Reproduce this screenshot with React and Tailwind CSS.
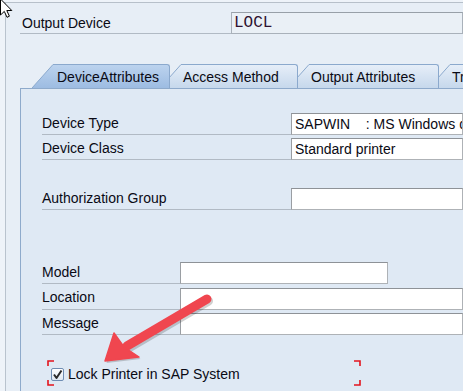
import React from "react";

function Tab({ label, active, z, first, bodyW, pl, id }) {
  const top = active ? "#bcd3ee" : "#e6eef8";
  const bot = active ? "#9dbce2" : "#c6d8ec";
  return (
    <div className={`relative flex h-[24px] items-stretch ${first ? "" : "-ml-[10px]"} ${z}`}>
      <svg width="21" height="24" className="block shrink-0">
        <defs>
          <linearGradient id={id} x1="0" y1="0" x2="0" y2="1">
            <stop offset="0" stopColor={top} />
            <stop offset="1" stopColor={bot} />
          </linearGradient>
        </defs>
        <polygon points="0,24 21,0.5 21,24" fill={`url(#${id})`} />
        <line x1="0" y1="24" x2="21" y2="0.5" stroke="#8ba9cd" strokeWidth="1" />
      </svg>
      <div
        className={`flex items-center border-t border-r border-[#8ba9cd] rounded-tr-[3px] whitespace-nowrap overflow-hidden text-[14px] text-[#0a0a14] ${
          active ? "bg-gradient-to-b from-[#bcd3ee] to-[#9dbce2]" : "bg-gradient-to-b from-[#e6eef8] to-[#c6d8ec]"
        } ${bodyW} ${pl}`}
      >
        <span className="relative top-[1px]">{label}</span>
      </div>
    </div>
  );
}

function Row({ label, labelW, inputW, value, h, mt }) {
  return (
    <div className={`flex ${h} ${mt}`}>
      <div className={`flex items-center border-b border-[#b1bac4] text-[14px] text-[#0a0a14] ${labelW} shrink-0`}>
        <span className="relative top-[1px]">{label}</span>
      </div>
      <div
        className={`self-end h-[22px] bg-white border border-[#aeb2b6] border-t-[#8e9297] border-l-[#9a9ea3] flex items-center pl-[3px] whitespace-pre overflow-hidden text-[14px] text-[#0a0a14] ${inputW}`}
      >
        {value}
      </div>
    </div>
  );
}

export default function App() {
  return (
    <div className="relative w-[463px] h-[391px] overflow-hidden bg-[#e7eef6] font-['Liberation_Sans',Arial,sans-serif] flex flex-col">
      <div className="h-[3px] shrink-0 bg-[#eef3f9] border-b border-[#b7c0ca]" />
      <div className="flex flex-1 min-h-0">
        <div className="w-[6px] shrink-0 bg-[#eef3f9] border-r border-[#b9c3ce]" />
        <div className="flex-1 flex flex-col min-w-0">
          {/* header row */}
          <div className="flex h-[22px] mt-[9px] shrink-0">
            <div className="ml-[14px] w-[211px] shrink-0 border-b border-[#b1bac4] flex items-center pl-[2px] text-[14px] text-[#0a0a14]">
              <span className="relative top-[1px]">Output Device</span>
            </div>
            <div className="flex-1 bg-[#eaf0f6] border border-[#a9b1ba] border-t-[#98a0a8] flex items-center pl-[2px] font-['Liberation_Mono',monospace] text-[16px] text-[#2e1230]">
              LOCL
            </div>
          </div>
          {/* tabs */}
          <div className="flex ml-[26px] mt-[30px] shrink-0 whitespace-nowrap">
            <Tab id="g1" label="DeviceAttributes" active first z="z-[4]" bodyW="w-[117px]" pl="pl-[4px]" />
            <Tab id="g2" label="Access Method" z="z-[3]" bodyW="w-[117px]" pl="pl-[2px]" />
            <Tab id="g3" label="Output Attributes" z="z-[2]" bodyW="w-[130px]" pl="pl-[2px]" />
            <Tab id="g4" label="Tray Info" z="z-[1]" bodyW="w-[80px]" pl="pl-[2px]" />
          </div>
          {/* panel */}
          <div className="ml-[14px] flex-1 bg-[#dfe9f4] border-l border-t border-[#8eaacb] pl-[21px] flex flex-col">
            <Row label="Device Type" labelW="w-[249px]" inputW="w-[200px]" value="SAPWIN    : MS Windows driver via SAPLPD" h="h-[25px]" mt="mt-[21px]" />
            <Row label="Device Class" labelW="w-[249px]" inputW="w-[200px]" value="Standard printer" h="h-[25px]" mt="" />
            <Row label="Authorization Group" labelW="w-[249px]" inputW="w-[200px]" value="" h="h-[25px]" mt="mt-[25px]" />
            <Row label="Model" labelW="w-[138px]" inputW="w-[208px]" value="" h="h-[25px]" mt="mt-[49px]" />
            <Row label="Location" labelW="w-[138px]" inputW="w-[300px]" value="" h="h-[26px]" mt="" />
            <Row label="Message" labelW="w-[138px]" inputW="w-[300px]" value="" h="h-[25px]" mt="" />
            <div className="flex items-center mt-[29px] ml-[9px]">
              <div className="w-[13px] h-[13px] border border-[#6f8db3] rounded-[2px] bg-gradient-to-b from-[#ffffff] to-[#dfe8f2] flex items-center justify-center">
                <svg width="11" height="11" viewBox="0 0 11 11">
                  <path d="M2 5.5 L4.5 9 L9.5 1.5" fill="none" stroke="#2b2b2b" strokeWidth="2" strokeLinejoin="round" />
                </svg>
              </div>
              <span className="ml-[4px] text-[14px] text-[#0a0a14]">Lock Printer in SAP System</span>
            </div>
          </div>
        </div>
      </div>

      {/* annotation overlay */}
      <svg className="absolute left-0 top-0 pointer-events-none" width="463" height="391" viewBox="0 0 463 391">
        <path d="M48 366 V361 H54 M48 380 V385 H54 M354 361 H360 V366 M354 385 H360 V380" fill="none" stroke="#e3131c" strokeWidth="1.6" />
        <g opacity="0.18" transform="translate(1.5,2)">
          <line x1="207" y1="299" x2="127" y2="346" stroke="#000" strokeWidth="9" strokeLinecap="round" />
          <polygon points="105,361 114,333 124,347 139,357" fill="#000" />
        </g>
        <line x1="207" y1="299" x2="127" y2="346" stroke="#f0464f" strokeWidth="9" strokeLinecap="round" />
        <polygon points="105,361 114,333 124,347 139,357" fill="#f0464f" stroke="#f0464f" strokeWidth="1.5" strokeLinejoin="round" />
        <path d="M0.5 -1 L0.5 15 L4.3 11.4 L7 17.3 L9.4 16.2 L6.8 10.5 L11.8 10.5 Z" fill="#fff" stroke="#000" strokeWidth="1" strokeLinejoin="round" />
      </svg>
    </div>
  );
}
